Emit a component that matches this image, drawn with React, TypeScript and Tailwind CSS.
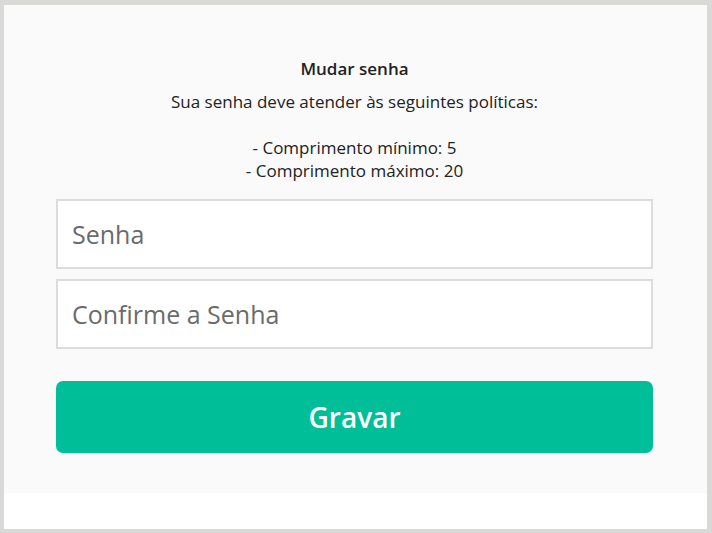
export default function App() {
  return (
    <div className="w-[712px] h-[533px] bg-[#d9d9d7] pt-[5px] pr-[5px] pb-[4px] pl-[4px] font-['Open_Sans',sans-serif]">
      <div className="flex h-full flex-col bg-white">
        <div className="bg-[#fafafa] pl-[52px] pr-[54px] pt-[52px] pb-[40px]">
          {/* cabeçalho com as regras da senha */}
          <div className="text-center text-[#222] text-[17px] leading-[23px]">
            <h1 className="text-[17px] font-semibold leading-[23px]">Mudar senha</h1>
            <p className="mt-[10px]">Sua senha deve atender às seguintes políticas:</p>
            <p className="mt-[23px]">- Comprimento mínimo: 5</p>
            <p>- Comprimento máximo: 20</p>
          </div>

          <form className="mt-[17px] flex flex-col" onSubmit={(e) => e.preventDefault()}>
            <input
              type="password"
              placeholder="Senha"
              className="h-[70px] w-full border-2 border-[#dcdcdc] bg-white px-[14px] text-[25px] text-[#333] placeholder:text-[#6b6b6b] outline-none"
            />
            <input
              type="password"
              placeholder="Confirme a Senha"
              className="mt-[10px] h-[70px] w-full border-2 border-[#dcdcdc] bg-white px-[14px] text-[25px] text-[#333] placeholder:text-[#6b6b6b] outline-none"
            />
            <button
              type="submit"
              className="mt-[32px] h-[72px] w-full rounded-[7px] bg-[#00bf98] text-[28px] font-semibold text-white"
            >
              Gravar
            </button>
          </form>
        </div>
        <div className="flex-1 bg-white" />
      </div>
    </div>
  );
}
